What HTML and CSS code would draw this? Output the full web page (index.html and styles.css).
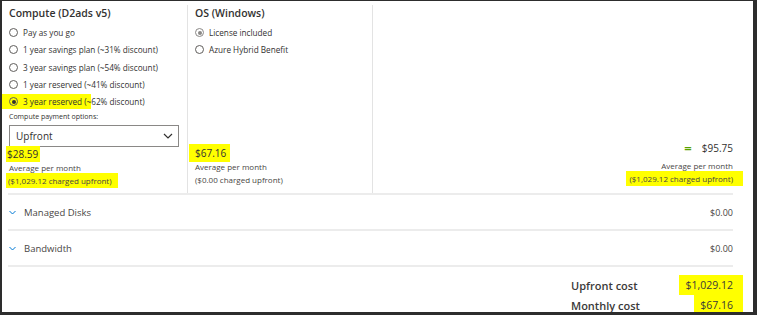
FILE: index.html
```html
<!DOCTYPE html>
<html lang="en">
<head>
    <meta charset="UTF-8">
    <title>Pricing estimate</title>
    <link rel="stylesheet" href="styles.css">
</head>
<body>
    <div class="frame">
        <div class="top">
            <div class="col col-compute">
                <h2>Compute (D2ads v5)</h2>
                <div class="opt"><span class="radio"></span>Pay as you go</div>
                <div class="opt"><span class="radio"></span>1 year savings plan (~31% discount)</div>
                <div class="opt"><span class="radio"></span>3 year savings plan (~54% discount)</div>
                <div class="opt"><span class="radio"></span>1 year reserved (~41% discount)</div>
                <div class="opt"><span class="mark mark-opt"><span class="radio on"></span>3 year reserved (~</span>62% discount)</div>
                <div class="pay-label">Compute payment options:</div>
                <div class="select">
                    <span>Upfront</span>
                    <svg width="10" height="6" viewBox="0 0 10 6"><path d="M1 1l4 4 4-4" fill="none" stroke="#323130" stroke-width="1.2"/></svg>
                </div>
                <div class="price"><span class="mark">$28.59</span></div>
                <div class="sub">Average per month</div>
                <div class="sub"><span class="mark mark-wide">($1,029.12 charged upfront)</span></div>
            </div>
            <div class="col col-os">
                <h2>OS (Windows)</h2>
                <div class="opt"><span class="radio on grey"></span>License included</div>
                <div class="opt"><span class="radio"></span>Azure Hybrid Benefit</div>
                <div class="spacer"></div>
                <div class="price"><span class="mark mark-os">$67.16</span></div>
                <div class="sub">Average per month</div>
                <div class="sub">($0.00 charged upfront)</div>
            </div>
            <div class="col col-total">
                <div class="total"><span class="eq">=</span><span>$95.75</span></div>
                <div class="sub">Average per month</div>
                <div class="sub"><span class="mark">($1,029.12 charged upfront)</span></div>
            </div>
        </div>
        <div class="row">
            <span class="chev"><svg width="7" height="5" viewBox="0 0 7 5"><path d="M.5 1l3 3 3-3" fill="none" stroke="#0078d4" stroke-width="1"/></svg></span>
            <span class="row-name">Managed Disks</span>
            <span class="row-cost">$0.00</span>
        </div>
        <div class="row">
            <span class="chev"><svg width="7" height="5" viewBox="0 0 7 5"><path d="M.5 1l3 3 3-3" fill="none" stroke="#0078d4" stroke-width="1"/></svg></span>
            <span class="row-name">Bandwidth</span>
            <span class="row-cost">$0.00</span>
        </div>
        <div class="summary">
            <div class="sum-line"><span class="sum-name">Upfront cost</span><span class="mark sum-val">$1,029.12</span></div>
            <div class="sum-line"><span class="sum-name">Monthly cost</span><span class="mark sum-val">$67.16</span></div>
        </div>
    </div>
</body>
</html>
```

FILE: styles.css
```css
body {
    margin: 0;
    font-family: "Open Sans", "Noto Sans", sans-serif;
    color: #323130;
}
.frame {
    width: 757px;
    height: 315px;
    box-sizing: border-box;
    border-style: solid;
    border-color: #2d2d2d;
    border-width: 1px 4px 3px 2px;
    background: #fff;
    padding: 0 20px 0 6px;
    overflow: hidden;
}
.top {
    display: flex;
    height: 188px;
    padding-top: 4px;
    border-bottom: 2px solid #ececec;
}
.col {
    display: flex;
    flex-direction: column;
}
.col-compute {
    width: 170px;
    padding: 0 8px 0 1px;
    border-right: 1px solid #e3e3e3;
}
.col-os {
    width: 177px;
    padding: 0 0 7px 7px;
    border-right: 1px solid #e3e3e3;
}
.col-total {
    flex: 1;
    align-items: flex-end;
    justify-content: flex-end;
    padding-bottom: 8px;
}
h2 {
    font-size: 10.5px;
    font-weight: 600;
    margin: 1px 0 4px;
    line-height: 14px;
}
.opt {
    display: flex;
    align-items: center;
    font-size: 8.2px;
    height: 17.3px;
}
.radio {
    width: 7px;
    height: 7px;
    border: 1px solid #605e5c;
    border-radius: 50%;
    margin-right: 5px;
    box-sizing: content-box;
    position: relative;
    flex: none;
}
.radio.on::after {
    content: "";
    position: absolute;
    left: 1.5px;
    top: 1.5px;
    width: 4px;
    height: 4px;
    border-radius: 50%;
    background: #323130;
}
.radio.grey {
    border-color: #8a8886;
}
.radio.grey::after {
    background: #8a8886;
}
.mark {
    background: #ffff00;
}
.mark-opt {
    display: flex;
    align-items: center;
    margin-left: -9px;
    padding: 2px 0 2px 9px;
}
.pay-label {
    font-size: 7px;
    margin-top: 2px;
    line-height: 10px;
}
.select {
    height: 22px;
    margin-top: 3px;
    box-sizing: border-box;
    border: 1px solid #8a8886;
    display: flex;
    align-items: center;
    justify-content: space-between;
    padding: 0 5px 0 6px;
    font-size: 10px;
}
.price {
    font-size: 10px;
    line-height: 14px;
    margin-top: 0;
}
.price .mark {
    padding: 1px 2px 1px 1px;
    margin-left: -3px;
}
.mark-os {
    margin-left: -6px !important;
    padding: 2px 4px 2px 6px !important;
}
.sub {
    font-size: 8px;
    line-height: 13px;
    color: #484644;
}
.mark-wide {
    padding: 2px 6px 2px 2px;
    margin-left: -3px;
}
.col-total .sub .mark {
    padding: 2px 10px 2px 3px;
    margin-right: -10px;
}
.spacer {
    flex: 1;
}
.total {
    font-size: 10px;
    display: flex;
    align-items: center;
    gap: 10px;
    margin-bottom: 4px;
}
.eq {
    color: #57a300;
    font-weight: 700;
    font-size: 13px;
    line-height: 12px;
}
.row {
    display: flex;
    align-items: center;
    height: 34px;
    border-bottom: 2px solid #ececec;
    font-size: 9px;
    color: #484644;
}
.chev {
    width: 15px;
    padding-left: 1px;
    display: flex;
}
.row-name {
    flex: 1;
    font-size: 9.5px;
}
.summary {
    display: flex;
    flex-direction: column;
    align-items: flex-end;
    padding-top: 8px;
}
.sum-line {
    display: flex;
    align-items: center;
    width: 162px;
    height: 20px;
    font-size: 11px;
    font-weight: 600;
    color: #3b3a39;
}
.sum-name {
    flex: 1;
}
.sum-val {
    font-weight: 400;
    font-size: 10.5px;
    padding: 3px 10px 3px 6px;
    margin-right: -10px;
}
```
